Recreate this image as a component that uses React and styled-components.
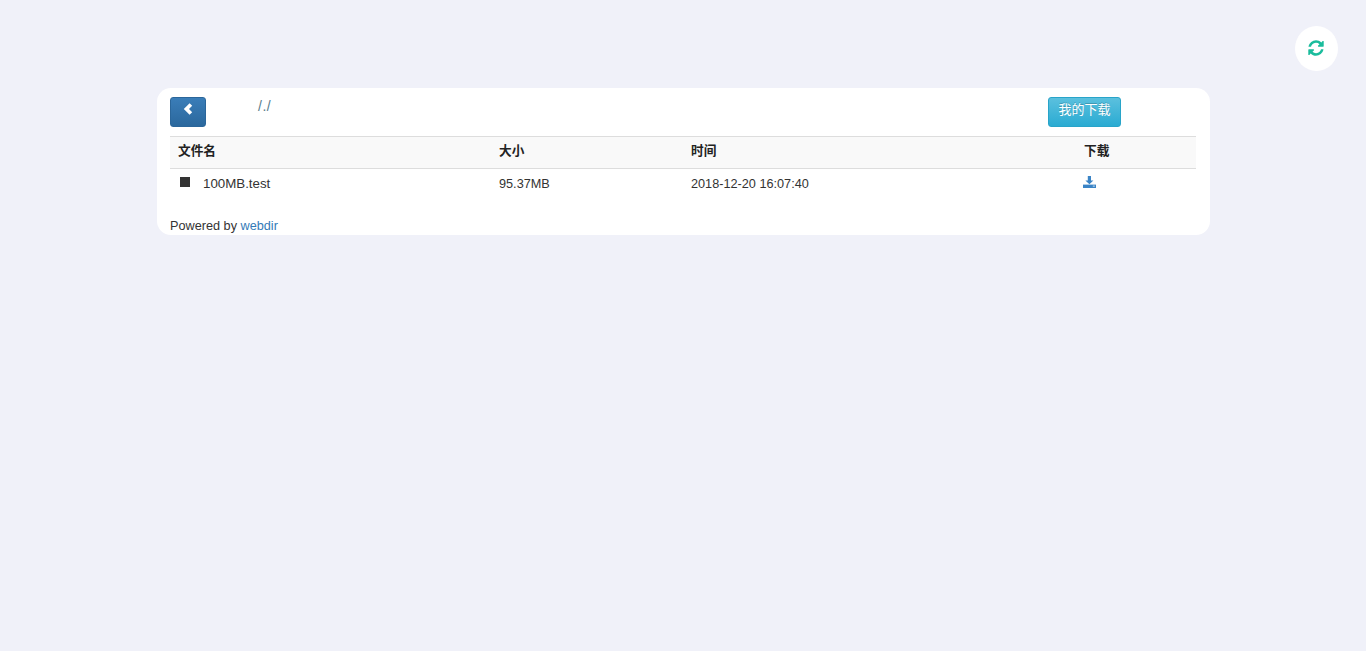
import React from 'react';
import styled, { createGlobalStyle } from 'styled-components';

const files = [{ name: '100MB.test', size: '95.37MB', time: '2018-12-20 16:07:40' }];

export default function App() {
    return (
        <Page>
            <GlobalStyle />
            <RefreshButton aria-label="refresh">
                <svg width="18" height="18" viewBox="0 0 1792 1792" fill="currentColor">
                    <path d="M1639 1056q0 5-1 7-64 268-268 434.5t-478 166.5q-146 0-282.5-55t-243.5-157l-129 129q-19 19-45 19t-45-19-19-45v-448q0-26 19-45t45-19h448q26 0 45 19t19 45-19 45l-137 137q71 66 161 102t187 36q134 0 250-65t186-179q11-17 53-117 8-23 30-23h192q13 0 22.5 9.5t9.5 22.5zm25-800v448q0 26-19 45t-45 19h-448q-26 0-45-19t-19-45 19-45l138-138q-148-137-349-137-134 0-250 65t-186 179q-11 17-53 117-8 23-30 23h-199q-13 0-22.5-9.5t-9.5-22.5v-7q65-268 270-434.5t480-166.5q146 0 284 55.5t245 156.5l130-129q19-19 45-19t45 19 19 45z" />
                </svg>
            </RefreshButton>
            <Panel>
                <Toolbar>
                    <BackButton aria-label="back">
                        <svg width="12" height="12" viewBox="0 0 12 12" fill="#fff">
                            <polygon points="7.6,0.2 10.2,2.8 7,6 10.2,9.2 7.6,11.8 1.8,6" />
                        </svg>
                    </BackButton>
                    <PathText>/./</PathText>
                    <DownloadsButton>我的下载</DownloadsButton>
                </Toolbar>
                <FileTable>
                    <colgroup>
                        <Col $w={321} />
                        <Col $w={192} />
                        <Col $w={393} />
                        <Col $w={120} />
                    </colgroup>
                    <thead>
                        <tr>
                            <HeadCell>文件名</HeadCell>
                            <HeadCell>大小</HeadCell>
                            <HeadCell>时间</HeadCell>
                            <HeadCell>下载</HeadCell>
                        </tr>
                    </thead>
                    <tbody>
                        {files.map((f) => (
                            <tr key={f.name}>
                                <Cell>
                                    <StopIcon />
                                    <FileName>{f.name}</FileName>
                                </Cell>
                                <Cell>{f.size}</Cell>
                                <Cell>{f.time}</Cell>
                                <Cell>
                                    <DownloadLink href="#download" aria-label="download">
                                        <svg width="13" height="12" viewBox="0 0 13 12" fill="currentColor">
                                            <path d="M4.8 0h3.2v4.5h2.4L6.4 8.2 2.4 4.5h2.4z" />
                                            <path d="M0 8.6h13V12H0z" />
                                            <rect x="9.8" y="9.6" width="2" height="1" fill="#cfe2f3" />
                                        </svg>
                                    </DownloadLink>
                                </Cell>
                            </tr>
                        ))}
                    </tbody>
                </FileTable>
                <Footer>
                    Powered by <FooterLink href="#webdir">webdir</FooterLink>
                </Footer>
            </Panel>
        </Page>
    );
}

const GlobalStyle = createGlobalStyle`
    html, body {
        margin: 0;
        padding: 0;
        background: #f0f1f9;
    }
    body {
        font-family: "Liberation Sans", "Noto Sans CJK SC", sans-serif;
        font-size: 12.7px;
        line-height: 20px;
        color: #333;
    }
`;

const Page = styled.div`
    position: relative;
    min-height: 651px;
    padding: 88px 156px 0 157px;
    box-sizing: border-box;
`;

const RefreshButton = styled.div`
    position: absolute;
    top: 26px;
    left: 1295px;
    width: 43px;
    height: 45px;
    padding: 0 1px 2px 0;
    box-sizing: border-box;
    border-radius: 50%;
    background: #fff;
    color: #1abc9c;
    display: flex;
    align-items: center;
    justify-content: center;
`;

const Panel = styled.div`
    background: #fff;
    border-radius: 14px;
    padding: 9px 14px 0 13px;
    height: 147px;
    box-sizing: border-box;
`;

const Toolbar = styled.div`
    display: flex;
    align-items: flex-start;
    height: 39px;
    border-bottom: 1px solid #ddd;
    margin-bottom: 0;
`;

const BackButton = styled.button`
    width: 36px;
    height: 30px;
    padding: 0 0 6px;
    box-sizing: border-box;
    border: 1px solid #2b669a;
    border-radius: 3px;
    background: linear-gradient(to bottom, #3a7db8 0%, #2b689d 100%);
    display: flex;
    align-items: center;
    justify-content: center;
`;

const PathText = styled.span`
    margin-left: 52px;
    margin-top: -1px;
    color: #5a7d8c;
    font-size: 14px;
    letter-spacing: 0.5px;
`;

const DownloadsButton = styled.button`
    margin-left: auto;
    margin-right: 75px;
    width: 73px;
    height: 30px;
    padding: 0 0 4px;
    box-sizing: border-box;
    border: 1px solid #28a4c9;
    border-radius: 3px;
    background: linear-gradient(to bottom, #5bc0de 0%, #2aabd2 100%);
    color: #fff;
    font: inherit;
    font-size: 13px;
    text-shadow: 0 -1px 0 rgba(0, 0, 0, 0.2);
`;

const FileTable = styled.table`
    width: 1026px;
    border-collapse: collapse;
    table-layout: fixed;
`;

const Col = styled.col`
    width: ${(p) => p.$w}px;
`;

const HeadCell = styled.th`
    height: 31px;
    padding: 0 8px 3px;
    box-sizing: border-box;
    background: #f9f9f9;
    border-bottom: 1px solid #ddd;
    text-align: left;
    font-weight: bold;
    color: #222;
`;

const Cell = styled.td`
    height: 30px;
    padding: 0 8px;
    vertical-align: middle;
`;

const FileName = styled.span`
    font-size: 13.3px;
`;

const StopIcon = styled.span`
    display: inline-block;
    width: 10px;
    height: 10px;
    background: #333;
    margin: 0 13px 0 2px;
    vertical-align: 1px;
`;

const DownloadLink = styled.a`
    color: #3a84c6;
    display: inline-block;
    height: 13px;
    line-height: 13px;
    margin-left: -1px;
`;

const Footer = styled.div`
    margin-top: 17px;
`;

const FooterLink = styled.a`
    color: #337ab7;
    text-decoration: none;
`;
